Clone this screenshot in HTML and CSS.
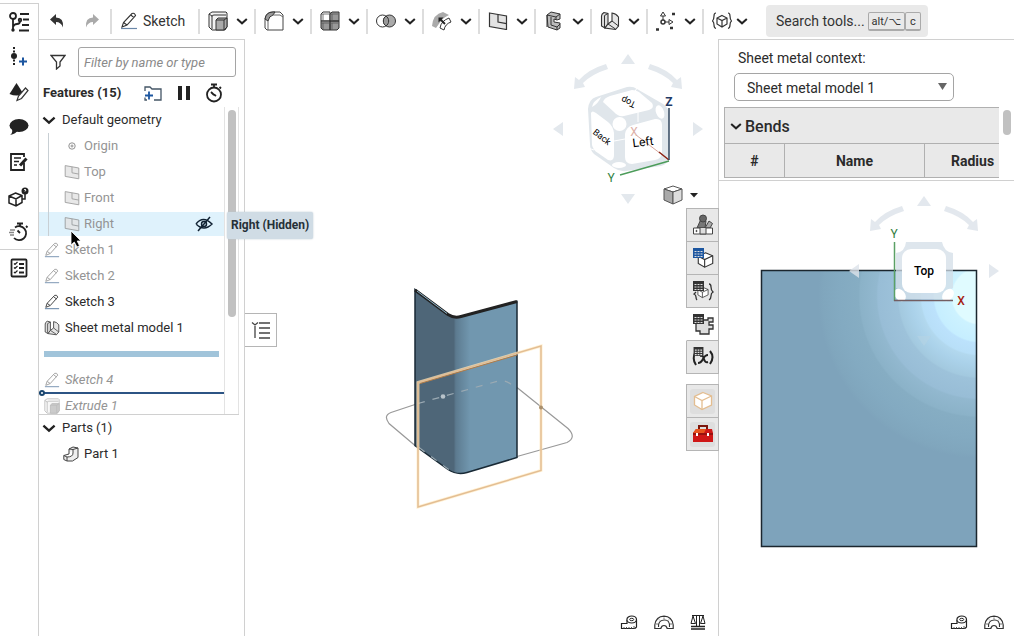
FILE: index.html
```html
<!DOCTYPE html>
<html lang="en">
<head>
<meta charset="utf-8">
<title>Part Studio</title>
<link rel="stylesheet" href="styles.css">
</head>
<body>
<svg class="defs" aria-hidden="true">
  <symbol id="chev" viewBox="0 0 12 12"><path d="M1.200 4 6 8.300 10.800 4" fill="none" stroke="#222" stroke-width="2"/></symbol>
  <symbol id="pencil" viewBox="0 0 18 18"><path d="M2 15 3.500 10.500 12 1.500Q14.500 .5 15.500 3.500L7 13ZM3.500 10.500 7 13M10.800 3l3.200 2.600" fill="#fff" stroke="currentColor" stroke-width="1.100"/><path d="M1 16.500h16" stroke="#6a87a8" stroke-width="1.200"/></symbol>
  <symbol id="plane" viewBox="0 0 20 18"><path d="M1.500 1 18.500 4v13.500L1.500 14.500Z" fill="#e3e3e3" stroke="currentColor" stroke-width="1.200"/><path d="M10 2.500V10l8.500 1.600" fill="none" stroke="currentColor" stroke-width="1.200"/></symbol>
  <symbol id="extrude" viewBox="0 0 20 20"><path d="M1 3 4 1h14l1 1v14l-2 3H4l-3-3Z" fill="#f2f2f2" stroke="currentColor"/><path d="M4 5.500Q4 4 6 4h12M4 5v13M1 3l3 2" fill="none" stroke="currentColor"/><path d="M8 9l2-2h9v9l-3 3H8Z" fill="#aaa" stroke="currentColor"/><path d="M8 9h8v10M16 9l3-2" fill="none" stroke="currentColor"/></symbol>
  <symbol id="sheet" viewBox="0 0 20 20"><path d="M1.500 5Q1.500 3 4 1.500L8 2.500V13l-3 4-3.500-2Z" fill="#ddd" stroke="currentColor" stroke-width="1.100"/><path d="M8 13l4-3V2q4 .5 6.500 4v9L15.500 18.500 5 17Z" fill="#e6e6e6" stroke="currentColor" stroke-width="1.100"/><path d="M4.500 4.500V16M8 13l7.500 5M12 10l6.500 5M4.500 4.500 8 2.500" fill="none" stroke="currentColor"/></symbol>
  <symbol id="cube" viewBox="0 0 20 20"><path d="M10 1.500 18.500 5v9L9 18.500 1.500 14V5.500Z" fill="#fff" stroke="currentColor" stroke-width="1.300"/><path d="M1.500 5.500 9 9.500 18.500 5M9 9.500v9" fill="none" stroke="currentColor" stroke-width="1.300"/></symbol>
  <symbol id="grid" viewBox="0 0 11 10"><path d="M0 0h11v10H0Z" fill="currentColor"/><path d="M1.500 3.500h2M4.500 3.500h2M7.500 3.500h2M1.500 6h2M4.500 6h2M7.500 6h2M1.500 8.500h2M4.500 8.500h2M7.500 8.500h2" stroke="#ddd" stroke-width="1.200"/></symbol>
  <symbol id="tape" viewBox="0 0 18 15"><path d="M16.500 5v7Q16 13.500 13 13.500H1.500v-5H7V5" fill="#fff" stroke="#222" stroke-width="1.200"/><ellipse cx="11.700" cy="4.500" rx="4.800" ry="3.500" fill="#fff" stroke="#222" stroke-width="1.200"/><ellipse cx="11.700" cy="4.500" rx="2" ry="1.200" fill="none" stroke="#222"/><path d="M4 12v1.500M6.500 12v1.500M9 12v1.500M11.500 12v1.500M14 11v1.500" stroke="#555"/></symbol>
  <symbol id="protractor" viewBox="0 0 20 15"><path d="M.8 13.500V10Q2 1.500 10 1.200 18 1.500 19.200 10v3.500h-6Q12.500 10.500 10 10.500T6.800 13.500Z" fill="#fff" stroke="#333" stroke-width="1.200"/><path d="M4.500 12Q4 5.500 10 5t5.500 7" fill="none" stroke="#333" stroke-width="1.100"/><path d="M2 9h2M5 4.500l1 1M10 2.500v1.500M15 4.500l-1 1M18 9h-2" stroke="#777"/></symbol>
  <symbol id="navarrows" viewBox="0 0 150 150">
    <path d="M75 0 82 10H68ZM0 75 10 68v14ZM150 75l-10-7v14Z"/>
    <path d="M53 10 55 15Q39 20 30 29L32 33 21 35 22 23 26 26Q36 15 53 10ZM97 10 95 15Q111 20 120 29L118 33 129 35 128 23 124 26Q114 15 97 10Z"/>
  </symbol>
</svg>
<div class="app">
  <nav class="rail" aria-label="Panels">
    <button aria-label="Feature list"><svg width="22" height="22" viewBox="0 0 22 22" fill="none" stroke="#222" stroke-width="1.800"><circle cx="5" cy="5" r="3"/><circle cx="12" cy="9" r="1.300"/><path d="M5 8v11M5 16q1-3 4-3 3 0 3-3M12 3h9M15 8.500h6M14 14h7M11 19.500h10"/><circle cx="5" cy="19" r=".8"/></svg></button>
    <button aria-label="Insert"><svg width="22" height="22" viewBox="0 0 22 22"><circle cx="6" cy="10" r="3" fill="#222"/><path d="M6 1v2M6 4.500v2M6 13.500v2M6 17v2" stroke="#222" stroke-width="2"/><path d="M11 15.500h8M15 11.500v8" stroke="#1c56a0" stroke-width="2"/></svg></button>
    <button aria-label="Appearance"><svg width="22" height="22" viewBox="0 0 22 22"><path d="M8.500 2 15.500 13Q8.500 16 1.500 13Z" fill="#222"/><path d="M9 19.500l1.500-4.500L17.500 7l2.500 2.500-6.500 8Z" fill="#fff" stroke="#333" stroke-width="1.200"/></svg></button>
    <button aria-label="Comments"><svg width="22" height="22" viewBox="0 0 22 22"><ellipse cx="11" cy="9.500" rx="9.500" ry="6.500" fill="#222"/><path d="M4 13Q5 17 2 19q6-1 8-5Z" fill="#222"/></svg></button>
    <button aria-label="Notes"><svg width="22" height="22" viewBox="0 0 22 22" fill="none" stroke="#222" stroke-width="1.800"><path d="M16 12v7H3V3h13v3"/><path d="M6 7h7M6 10.500h5M6 14h3" stroke-width="1.500"/><path d="M18.500 7.500l-6.500 7" stroke-width="3"/></svg></button>
    <button aria-label="Configuration help"><svg width="22" height="22" viewBox="0 0 22 22"><path d="M7.500 7 14 9.500v7L8 20l-7-3V10ZM1 10l7 3 6-3.500M8 13v7" fill="none" stroke="#222" stroke-width="1.500"/><circle cx="17" cy="5" r="3.500" fill="#222"/><path d="M17 8v5h-3" fill="none" stroke="#222" stroke-width="1.500"/><path d="M16 4q1-1.500 2 0l-1 1.500" fill="none" stroke="#fff"/></svg></button>
    <button aria-label="Performance"><svg width="22" height="22" viewBox="0 0 22 22" fill="none" stroke="#222" stroke-width="1.800"><path d="M7 6.500A7 7 0 1 1 6 17"/><path d="M9 2.500h6M12 3v2M12 12l-2.500-2.500M18 5l1.500 1.500"/><path d="M2 9h5M1 11.500h5M2 14h4" stroke="#888" stroke-width="1.300"/></svg></button>
    <button class="rail-last" aria-label="Checklist"><svg width="20" height="20" viewBox="0 0 20 20" fill="none" stroke="#222"><rect x="2.500" y="1.500" width="15" height="17" rx="1" stroke-width="1.800"/><path d="M10 6h5M10 10h5M10 14.500h5" stroke-width="1.800"/><path d="M5 5.500l1 1 2.500-2.500M5 9.500l1 1 2.500-2.500M5 14l1 1 2.500-2.500" stroke-width="1.200"/></svg></button>
  </nav>
  <div class="workspace">
    <header class="toolbar">
      <div class="history">
        <button aria-label="Undo"><svg width="16" height="16" viewBox="0 0 16 16"><path d="M1 6.500 7 1v3.500q8 0 7 10Q12 9 7 9v3Z" fill="#333"/></svg></button>
        <button aria-label="Redo"><svg width="16" height="16" viewBox="0 0 16 16"><path d="M15 6.500 9 1v3.500q-8 0-7 10Q4 9 9 9v3Z" fill="#aaa"/></svg></button>
      </div>
      <button class="sketch"><svg width="18" height="18"><use href="#pencil"/></svg>Sketch</button>
      <button class="tool" aria-label="Extrude"><svg width="20" height="20"><use href="#extrude"/></svg><svg width="12" height="12"><use href="#chev"/></svg></button>
      <button class="tool" aria-label="Fillet"><svg width="20" height="20" viewBox="0 0 20 20"><path d="M1 8Q2 1 9 1h7l3 3v15H3l-2-2Z" fill="#fff" stroke="#444"/><path d="M1 8Q2 1 9 1h2L9 4Q5 5 4 10Z" fill="#999" stroke="#333"/><path d="M4 10v9M9 4h7l3 2" fill="none" stroke="#666"/></svg><svg width="12" height="12"><use href="#chev"/></svg></button>
      <button class="tool" aria-label="Pattern"><svg width="20" height="20" viewBox="0 0 20 20" stroke="#333"><path d="M1 3l2-2h7v9H1Z" fill="#fff"/><path d="M10 3l2-2h7v9h-9ZM1 10h9v9H3l-2-2ZM10 10h9v7l-2 2h-7Z" fill="#999"/><path d="M3 3v7M3 12v7M12 3v7M12 12v7M1 3h17M1 12h17" fill="none" stroke="#555" stroke-width=".8"/></svg><svg width="12" height="12"><use href="#chev"/></svg></button>
      <button class="tool" aria-label="Boolean"><svg width="20" height="20" viewBox="0 0 20 20" stroke="#333"><circle cx="6.500" cy="10" r="6" fill="#fff"/><circle cx="13.500" cy="10" r="6" fill="#aaa"/><path d="M10 5a6 6 0 0 1 0 10a6 6 0 0 1 0-10Z" fill="#999"/></svg><svg width="12" height="12"><use href="#chev"/></svg></button>
      <button class="tool" aria-label="Move face"><svg width="20" height="20" viewBox="0 0 20 20"><path d="M0 15Q1 3 11 1l6 3Q11 7 9 10L4 17Z" fill="#aaa"/><path d="M8 17q1-7 9-10l2 4q-6 2-7 8Z" fill="#fff" stroke="#333"/><path d="M13 13 8 8" stroke="#222" stroke-width="1.800"/><path d="M6.500 6.500h5l-5 5Z" fill="#222"/></svg><svg width="12" height="12"><use href="#chev"/></svg></button>
      <button class="tool" aria-label="Plane"><svg width="20" height="18"><use href="#plane"/></svg><svg width="12" height="12"><use href="#chev"/></svg></button>
      <button class="tool" aria-label="Frame"><svg width="20" height="20" viewBox="0 0 20 20" stroke="#333"><path d="M3 4 7 1l9 2v5l-3 1-3-1v3l6 1v5l-3 2-9-3Z" fill="#bbb"/><path d="M3 4l9 2 4-3M12 6v3M7 6v8l6 2 3-3M13 16v3M3 4v12" fill="none"/></svg><svg width="12" height="12"><use href="#chev"/></svg></button>
      <button class="tool" aria-label="Sheet metal"><svg width="20" height="20"><use href="#sheet"/></svg><svg width="12" height="12"><use href="#chev"/></svg></button>
      <button class="tool" aria-label="Mate connector"><svg width="20" height="20" viewBox="0 0 20 20" fill="none" stroke="#333"><circle cx="7" cy="11" r="2" stroke-width="1.500"/><path d="M7 9V5M9 11h4M4.500 5 7 1l2.500 4ZM13 8.500l4 2.500-4 2.500Z"/><path d="M0 18.500h3M14 17h3M16 3h3" stroke-width="2.500"/></svg><svg width="12" height="12"><use href="#chev"/></svg></button>
      <button class="tool tool-tight" aria-label="Custom features"><svg width="20" height="20" viewBox="0 0 20 20" fill="none" stroke="#333" stroke-width="1.200"><path d="M10 4.500 15 7v6l-5 3-5-3V7ZM5 7l5 2.500L15 7M10 9.500V16"/><path d="M4 2Q2 2 2 5T.5 10Q2 11 2 14T4 17.500M16 2q2 0 2 3t1.500 5Q18 11 18 14t-2 3.500"/></svg><svg width="12" height="12"><use href="#chev"/></svg></button>
      <button class="search">Search tools...<span class="keys"><kbd>alt/⌥</kbd><kbd>c</kbd></span></button>
    </header>
    <div class="content">
      <aside class="features">
        <div class="filter">
          <svg width="16" height="16" viewBox="0 0 16 16"><path d="M1 1.500h14L10 8v4L6.500 15V8Z" fill="none" stroke="#333" stroke-width="1.300"/></svg>
          <input type="text" placeholder="Filter by name or type" aria-label="Filter by name or type">
        </div>
        <div class="features-head">
          <h2>Features (15)</h2>
          <button aria-label="Add folder"><svg width="20" height="18" viewBox="0 0 20 18" fill="none"><path d="M2 7V3h5l2 2h9v11h-7" stroke="#456" stroke-width="1.300"/><path d="M2 11.500h8M6 7.500v8" stroke="#1c56a0" stroke-width="1.800"/><path d="M2 13.500V16h2" stroke="#456" stroke-width="1.300"/></svg></button>
          <button aria-label="Pause"><svg width="14" height="16" viewBox="0 0 14 16"><path d="M1 1h4v14H1ZM9 1h4v14H9Z" fill="#222"/></svg></button>
          <button aria-label="Regeneration times"><svg width="18" height="20" viewBox="0 0 18 20" fill="none" stroke="#222" stroke-width="1.800"><circle cx="9" cy="11.500" r="7"/><path d="M6 1.500h6M9 2v3M9 12 6 9M14.500 4l1.500 1.500M9 11.500l2 1.500"/></svg></button>
        </div>
        <div class="tree">
          <ul class="rows">
            <li class="row head"><svg width="14" height="14"><use href="#chev"/></svg>Default geometry</li>
            <li><ul class="children">
              <li class="row dim"><svg width="16" height="16" viewBox="0 0 16 16" fill="none" stroke="#777"><circle cx="8" cy="8" r="3.200"/><path d="M8 6.500v3M6.500 8h3"/></svg>Origin</li>
              <li class="row dim"><svg width="16" height="16"><use href="#plane"/></svg>Top</li>
              <li class="row dim"><svg width="16" height="16"><use href="#plane"/></svg>Front</li>
              <li class="row dim hovered"><svg width="16" height="16"><use href="#plane"/></svg>Right<button class="eye" aria-label="Show"><svg width="18" height="16" viewBox="0 0 18 16" fill="none" stroke="#123" stroke-width="1.500"><path d="M1 8q7-9 16 0-8 8-16 0"/><circle cx="9" cy="8" r="2.500"/><path d="M15 1 3 15"/></svg></button></li>
            </ul></li>
            <li class="row dim"><svg width="16" height="16"><use href="#pencil"/></svg>Sketch 1</li>
            <li class="row dim"><svg width="16" height="16"><use href="#pencil"/></svg>Sketch 2</li>
            <li class="row"><svg width="16" height="16"><use href="#pencil"/></svg>Sketch 3</li>
            <li class="row"><svg width="16" height="16"><use href="#sheet"/></svg>Sheet metal model 1</li>
            <li class="row rollback"><span></span></li>
            <li class="row dim pending"><svg width="16" height="16"><use href="#pencil"/></svg>Sketch 4</li>
            <li class="row dim pending drop"><svg width="16" height="16"><use href="#extrude"/></svg>Extrude 1</li>
          </ul>
          <div class="scroll"><span class="thumb"></span></div>
        </div>
        <ul class="parts">
          <li class="row head"><svg width="14" height="14"><use href="#chev"/></svg>Parts (1)</li>
          <li class="row part"><svg width="16" height="16" viewBox="0 0 16 16" fill="#eee" stroke="#444"><path d="M.8 9.500 6 8V3l4-2 5 1v9.500L9.500 15H4L.8 13.500ZM.8 9.500 4 11q6 0 6-4V3.500L15 2M10 3.500 6 3M4 11v4"/></svg>Part 1</li>
        </ul>
        <div class="tooltip" role="tooltip">Right (Hidden)</div>
        <svg class="pointer" width="12" height="18" viewBox="0 0 12 18"><path d="M1 1v14l3.300-3L7 17l2.500-1.200L7.200 11H11Z" fill="#000" stroke="#fff" stroke-width=".8"/></svg>
      </aside>
      <main class="viewport">
        <svg class="scene" viewBox="245 40 473 596" role="img" aria-label="Sheet metal part">
          <defs><linearGradient id="bend" x1="415" x2="517" y1="0" y2="0" gradientUnits="userSpaceOnUse"><stop offset="0" stop-color="#4e6678"/><stop offset=".38" stop-color="#4e6678"/><stop offset=".4" stop-color="#5c7a8f"/><stop offset=".45" stop-color="#64859b"/><stop offset=".54" stop-color="#7197af"/><stop offset="1" stop-color="#7197af"/></linearGradient></defs>
          <path d="M415 446 389 424Q383 416 391 413L415 405M517 388 568 429Q577 438 567 443L517 457" fill="none" stroke="#999" stroke-width="1.200"/>
          <path d="M415 290 448 315Q454 319 461 317L517 302V458L467 473Q457 476 448 470L415 446Z" fill="url(#bend)" stroke="#182935" stroke-width="1.500"/>
          <path d="M415 290.500 448 315Q454 319 461 317L517 302" fill="none" stroke="#222" stroke-width="3"/>
          <path d="M417 291.500 447 314" stroke="#8fb6cc" fill="none"/>
          <path d="M418 404 500 381Q506 381 510 384L516 388M419 448 450 471" fill="none" stroke="#9baab3" stroke-width="1.200" stroke-dasharray="7 8"/>
          <path d="M418 383 541 346.500V471L418 507.500Z" fill="none" stroke="#ffe9bd" stroke-width="3" opacity=".7"/>
          <path d="M418 383 541 346.500V471L418 507.500Z" fill="none" stroke="#e3bd93" stroke-width="1.500"/>
          <path d="M420 384 517 355.500" stroke="#b27a45"/>
          <circle cx="443" cy="397" r="2.300" fill="#b8c3ca"/><circle cx="541" cy="408" r="2" fill="#a98f6c"/>
        </svg>
        <svg class="navcube" width="150" height="150" viewBox="553 54 150 150" role="img" aria-label="View cube">
          <g fill="#e3e8ed"><use href="#navarrows" x="553" y="54" width="150" height="150"/><path d="M628 204l7-10h-14Z"/></g>
          <path d="M588 109Q589 99 596 97L627 87Q633 86 637 89L663 104Q669 108 669 114V157Q668 164 661 166L626 171Q620 172 614 168L594 154Q590 150 590 144Z" fill="#e0e6eb"/>
          <path d="M603 102Q604 98 610 96L632 90Q636 90 639 92L652 103Q655 108 649 110L624 116Q618 117 614 112Z" fill="#fff"/>
          <path d="M591 113 592 145Q593 150 598 153L608 160Q614 162 614 155V133Q613 126 608 122L596 113Q592 110 591 113Z" fill="#fff"/>
          <path d="M625 134Q626 127 633 125L655 119Q662 118 662 125V153Q661 159 655 160L632 164Q625 164 625 157Z" fill="#fff"/>
          <path d="M638 112v10M614 141l11-2M637 88l-3 5M588 148l6 2" stroke="#fff"/>
          <circle cx="619.500" cy="124" r="7" fill="#fff"/><ellipse cx="660" cy="112" rx="4" ry="7" transform="rotate(-20 660 112)" fill="#fff"/><ellipse cx="619" cy="165" rx="7" ry="3" fill="#fff"/><path d="M592 107q1-6 9-10-3 7-9 10" fill="#fff"/>
          <path d="M669 160 636 135" stroke="#d9a79b"/><path d="M669 160 659 152" stroke="#8c2315" stroke-width="1.500"/>
          <path d="M669 161 620 175" stroke="#4c9c5a" stroke-width="1.500"/><path d="M669 160V108" stroke="#33475f" stroke-width="1.500"/>
          <g text-anchor="middle" font-size="12"><text x="634" y="136" fill="#dcb0a7">X</text><text x="669" y="106" fill="#1f3a66" font-weight="700">Z</text><text x="611" y="182" fill="#2f8244">Y</text>
          <g><text x="643" y="146" transform="rotate(-7 643 142)">Left</text><text x="602" y="140" font-size="9" transform="rotate(38 602 137)">Back</text><text x="628" y="107" font-size="9" transform="rotate(205 628 103)">Top</text></g></g>
        </svg>
        <button class="viewmode" aria-label="View options"><svg width="20" height="20" viewBox="0 0 20 20" stroke="#555"><path d="M1 4 10 1l9 3-9 3Z" fill="#fff"/><path d="M1 4v11l9 4V7Z" fill="#aaa"/><path d="M19 4v11l-9 4V7Z" fill="#ddd"/></svg><svg width="8" height="5" viewBox="0 0 8 5"><path d="M0 0h8L4 4.500Z" fill="#222"/></svg></button>
        <button class="outline" aria-label="Show list"><svg width="20" height="20" viewBox="0 0 20 20" fill="none" stroke="#444" stroke-width="1.300"><path d="M1 2.500 4 5l3-2.500M4 6v12M8 3h11M8 8h11M8 13h11M8 18h11"/></svg></button>
        <div class="tabs">
          <div class="tabset">
            <button aria-label="Materials"><svg width="22" height="22" viewBox="0 0 22 22" stroke="#444"><path d="M5 14 9 5l5 2-1 7Z" fill="#777"/><circle cx="11" cy="4.500" r="3.500" fill="#666"/><path d="M13 14l4-7 3.500 2.500L18 14Z" fill="#aaa"/><path d="M1.500 14h19v6h-19Z" fill="#fff"/><path d="M8 14v6h6v-6" fill="#ddd"/><circle cx="4.500" cy="17" r=".6"/></svg></button>
            <button aria-label="Tables"><svg width="22" height="22" viewBox="0 0 22 22" color="#333"><use href="#cube" x="5" y="4" width="17" height="18"/><g color="#1c56a0"><use href="#grid" x="1" y="1" width="11" height="10"/></g></svg></button>
            <button aria-label="Configurations"><svg width="22" height="22" viewBox="0 0 22 22" color="#333"><use href="#cube" x="5" y="6" width="12" height="13"/><use href="#grid" x="1" y="1" width="11" height="10"/><path d="M4 12q-1 1-2 2 2 1 2 3t1 3M17 4q2 0 2 3t2 5q-2 1-2 4t-2 4" fill="none" stroke="#333" stroke-width="1.300"/></svg></button>
            <button class="active" aria-label="Sheet metal table"><svg width="22" height="22" viewBox="0 0 22 22" color="#333"><path d="M8 7h8V5h5v4h-4v3h4v4h-4v5H8v-3H4v-8Z" fill="#ddd" stroke="#333" stroke-width="1.300"/><use href="#grid" x="1" y="1" width="11" height="10"/></svg></button>
            <button aria-label="Variables"><svg width="22" height="22" viewBox="0 0 22 22" color="#333"><path d="M3 7q-3 6 1 12M18 5q5 6 0 13M8 10q3-1 4 3t4 3M16 9q-3 0-5 4t-5 4" fill="none" stroke="#222" stroke-width="2"/><use href="#grid" x="1" y="1" width="11" height="9"/></svg></button>
          </div>
          <div class="tabset">
            <button aria-label="Box"><span class="chip"><svg width="20" height="20" color="#e3bd90"><use href="#cube"/></svg></span></button>
            <button aria-label="Toolbox"><span class="chip"><svg width="22" height="20" viewBox="0 0 22 20"><path d="M7 6V2h8v4" fill="none" stroke="#7d160c" stroke-width="2"/><path d="M1 9 4 5h16l1 4v9H1Z" fill="#cf1717"/><path d="M1 9 4 5h10l-2 4Z" fill="#e8551e"/><path d="M1 10h20" stroke="#86100d" stroke-width="1.500"/><path d="M5 9v3M16 9v3" stroke="#fff" stroke-width="2"/></svg></span></button>
          </div>
        </div>
        <div class="measure">
          <button aria-label="Measure"><svg width="18" height="15"><use href="#tape"/></svg></button>
          <button aria-label="Angle"><svg width="20" height="15"><use href="#protractor"/></svg></button>
          <button aria-label="Mass properties"><svg width="16" height="16" viewBox="0 0 16 16" fill="none" stroke="#222"><path d="M2 1.500h12M6.500 1.500V12M9.500 1.500V12M3 2 1 9.500h4.500L3 2M13 2l-2.500 7.500H15L13 2"/><path d="M1 12.500h14M1 15h14" stroke-width="1.500"/></svg></button>
        </div>
      </main>
      <section class="flat">
        <div class="context">
          <label for="ctx">Sheet metal context:</label>
          <div class="select"><select id="ctx"><option>Sheet metal model 1</option></select><svg width="9" height="7" viewBox="0 0 9 7"><path d="M0 0h9L4.500 7Z" fill="#666"/></svg></div>
        </div>
        <div class="tablewrap">
          <div class="clip">
            <table>
              <colgroup><col class="c-num"><col class="c-name"><col></colgroup>
              <thead>
                <tr><th class="group" colspan="3"><svg width="12" height="12"><use href="#chev"/></svg>Bends</th></tr>
                <tr><th>#</th><th>Name</th><th class="radius">Radius</th></tr>
              </thead>
            </table>
          </div>
          <div class="tscroll"><span class="thumb"></span></div>
        </div>
        <div class="flatview">
          <svg class="scene" viewBox="719 181 295 455" role="img" aria-label="Flat pattern">
            <defs><radialGradient id="shine" gradientUnits="userSpaceOnUse" cx="980" cy="296" r="162"><stop offset=".17" stop-color="#e0fbff"/><stop offset=".18" stop-color="#cdf2ff"/><stop offset=".28" stop-color="#c6eeff"/><stop offset=".29" stop-color="#bce2fc"/><stop offset=".36" stop-color="#b8dff8"/><stop offset=".37" stop-color="#b2d8ee"/><stop offset=".42" stop-color="#abd2ea"/><stop offset=".5" stop-color="#a3c9df"/><stop offset=".51" stop-color="#9dc2da"/><stop offset=".63" stop-color="#98bdd6"/><stop offset=".64" stop-color="#92b8cf"/><stop offset=".74" stop-color="#8bb2c8"/><stop offset=".75" stop-color="#86adc3"/><stop offset=".87" stop-color="#83aac1"/><stop offset=".97" stop-color="#80a6bd"/><stop offset="1" stop-color="#7ea3bb"/></radialGradient></defs>
            <rect x="761.500" y="270.500" width="215" height="276" fill="url(#shine)" stroke="#1b262e" stroke-width="1.500"/>
            <use href="#navarrows" x="849" y="196" width="150" height="150" fill="#dde3ea" opacity=".8"/>
            <path d="M924 346l7-10h-14Z" fill="#b5d3e5" opacity=".6"/>
            <path d="M906 242h36q2 10 11 11v35q-9 2-11 11h-36q-2-9-10-11v-35q9-1 10-11Z" fill="#d3dee7" opacity=".75"/>
            <ellipse cx="900" cy="295" rx="5" ry="7" transform="rotate(-40 900 295)" fill="#fff"/><ellipse cx="948" cy="295" rx="5" ry="7" transform="rotate(40 948 295)" fill="#fff"/>
            <rect x="902" y="249" width="44" height="44" rx="9" fill="#fff"/>
            <path d="M894.500 242v59" stroke="#5ba065" stroke-width="1.500"/><path d="M894 300.500h59" stroke="#735e62" stroke-width="1.500"/>
            <g text-anchor="middle" font-size="12"><text x="924" y="275" font-weight="500">Top</text><text x="894" y="238" fill="#2f7d42">Y</text><text x="961" y="305" fill="#a61e13" font-weight="500">X</text></g>
          </svg>
          <div class="measure">
            <button aria-label="Measure flat"><svg width="18" height="15"><use href="#tape"/></svg></button>
            <button aria-label="Angle flat"><svg width="20" height="15"><use href="#protractor"/></svg></button>
          </div>
        </div>
      </section>
    </div>
  </div>
</div>
</body>
</html>
```
FILE: styles.css
```css
*, *::before, *::after { box-sizing: border-box; }
body { margin: 0; background: #fff; color: #2b2b2b; font: 14px/18px Roboto, "Open Sans", sans-serif; }
button { display: flex; align-items: center; justify-content: center; margin: 0; padding: 0; border: 0; background: none; color: inherit; font: inherit; }
ul { margin: 0; padding: 0; list-style: none; }
svg { flex: none; display: block; }
.defs { position: absolute; width: 0; height: 0; }
.app { display: flex; height: 100vh; overflow: hidden; }

.rail { flex: none; width: 39px; margin-top: 3px; border-top: 1px solid #d0d0d0; border-right: 1px solid #d0d0d0; }
.rail button { width: 100%; height: 35px; }
.rail .rail-last { height: 36px; border-top: 1px solid #d0d0d0; }

.workspace { flex: 1; min-width: 0; display: flex; flex-direction: column; }
.toolbar { flex: none; display: flex; align-items: center; height: 39px; padding-top: 3px; color: #333; }
.history { display: flex; width: 71px; }
.history button { width: 35px; height: 25px; }
.sketch, .tool { height: 25px; padding-left: 8px; border-left: 2px solid #ddd; justify-content: flex-start; }
.sketch { width: 88px; gap: 5px; }
.tool { width: 56px; gap: 8px; }
.tool-tight { gap: 4px; }
.search { height: 32px; margin-left: 8px; padding: 0 7px 0 10px; gap: 3px; border-radius: 4px; background: #e9e9e9; }
.keys { display: flex; }
kbd { height: 19px; padding: 0 3px; border: 1px solid #aaa; border-bottom-width: 2px; border-radius: 2px; font: 11px/17px Roboto, "DejaVu Sans", sans-serif; }
kbd + kbd { padding: 0 4px; }

.content { flex: 1; min-height: 0; display: flex; }
.features { position: relative; z-index: 2; flex: none; width: 206px; border-top: 1px solid #d0d0d0; border-right: 1px solid #d0d0d0; font-size: 13px; }
.filter { display: flex; align-items: center; gap: 12px; padding: 7px 8px 0 11px; }
.filter input { flex: 1; min-width: 0; height: 30px; padding: 0 5px; border: 1px solid #a5a5a5; border-radius: 3px; font: italic 13px/18px Roboto, sans-serif; }
.filter input::placeholder { color: #8a8a8a; }
.features-head { display: flex; align-items: center; gap: 14px; height: 30px; padding: 2px 21px 0 4px; }
.features-head h2 { flex: 1; margin: 0; font-size: 13px; line-height: 18px; font-weight: 700; white-space: nowrap; }
.tree { display: flex; width: 200px; height: 308px; overflow: hidden; border-bottom: 1px solid #d0d0d0; }
.rows { flex: 1; min-width: 0; }
.row { display: flex; align-items: center; gap: 5px; height: 26px; padding-left: 5px; color: #2b2b2b; white-space: nowrap; }
.row > svg { color: #444; }
.head { padding-left: 3px; gap: 6px; }
.dim { color: #949494; }
.dim > svg { color: #8d8d8d; opacity: .8; }
.children { position: relative; }
.children::before { content: ""; position: absolute; left: 9px; top: 0; bottom: 1px; border-left: 1px solid #c8cfd4; }
.children .row { padding-left: 25px; gap: 4px; }
.hovered { background: #dff2fc; box-shadow: inset 0 1px #fff, inset 0 -1px #fff; }
.eye { margin-left: auto; margin-right: 11px; }
.rollback { padding: 0 5px; }
.rollback span { flex: 1; height: 6px; background: #a1c4da; }
.pending { font-style: italic; }
.drop { position: relative; }
.drop::before { content: ""; position: absolute; left: 0; right: 0; top: -1px; height: 2px; background: #2c5484; }
.drop::after { content: ""; position: absolute; left: 0; top: -3px; width: 6px; height: 6px; border: 2px solid #1b4770; border-radius: 50%; background: #fff; }
.drop > svg { opacity: .6; }
.scroll { flex: none; width: 15px; padding: 3px 3px 0; border: solid #e3e3e3; border-width: 0 1px; }
.scroll .thumb { display: block; width: 8px; height: 207px; border-radius: 4px; background: #c1c1c1; }
.parts .part { padding-left: 24px; }
.tooltip { position: absolute; left: 188px; top: 172px; padding: 5px 4px; border-radius: 2px; background: #d0dce5; color: #263038; font-size: 12px; line-height: 17px; font-weight: 700; white-space: nowrap; box-shadow: 0 0 2px #bcc8d0; }
.pointer { position: absolute; left: 31px; top: 190px; }

.viewport { position: relative; flex: 1; min-width: 0; }
.scene { width: 100%; height: 100%; font-family: Roboto, sans-serif; }
.navcube { position: absolute; right: 15px; top: 15px; font-family: Roboto, sans-serif; }
.viewmode { position: absolute; right: 20px; top: 146px; gap: 7px; }
.outline { position: absolute; left: 0; top: 274px; width: 32px; height: 34px; border: 1px solid #b5b5b5; border-left: 0; background: #fff; }
.tabs { position: absolute; z-index: 1; right: -1px; top: 169px; display: flex; flex-direction: column; gap: 10px; }
.tabset { display: flex; flex-direction: column; border-top: 1px solid #b5b5b5; }
.tabset button { width: 33px; height: 33px; border: 1px solid #b5b5b5; border-top: 0; background: #e8e8e8; }
.tabset .active { border-left-color: #fff; background: #fff; }
.chip { display: flex; align-items: center; justify-content: center; width: 25px; height: 25px; border-radius: 3px; background: #dedede; }
.measure { position: absolute; right: 12px; bottom: 6px; display: flex; align-items: center; gap: 16px; }

.flat { flex: none; display: flex; flex-direction: column; width: 296px; border-top: 1px solid #d0d0d0; border-left: 1px solid #d0d0d0; }
.context { display: flex; flex-direction: column; align-items: flex-start; gap: 6px; padding: 9px 15px 6px; }
.context label { padding-left: 4px; }
.select { position: relative; width: 220px; }
.select select { display: block; appearance: none; width: 100%; height: 28px; padding: 1px 12px 0; border: 1px solid #a5a5a5; border-radius: 5px; background: #fff; color: inherit; font: inherit; }
.select svg { position: absolute; right: 7px; top: 10px; }
.tablewrap { display: flex; height: 74px; padding-left: 5px; border-bottom: 1px solid #d0d0d0; }
.clip { flex: 1; min-width: 0; overflow: hidden; }
table { width: 340px; border-collapse: collapse; table-layout: fixed; }
th { height: 34px; padding: 0; border: 1px solid #b0b0b0; background: #e9e9e9; font-size: 14px; font-weight: 700; }
.group { height: 36px; padding: 3px 0 0 5px; text-align: left; font-size: 16px; font-weight: 500; }
.group svg { display: inline-block; margin-right: 3px; }
.c-num { width: 60px; }
.c-name { width: 140px; }
.radius { padding-left: 26px; text-align: left; }
.tscroll { flex: none; width: 15px; padding: 3px 4px; }
.tscroll .thumb { display: block; width: 8px; height: 25px; border-radius: 4px; background: #c1c1c1; }
.flatview { position: relative; flex: 1; min-height: 0; }
.flatview .measure { right: 10px; }
```
